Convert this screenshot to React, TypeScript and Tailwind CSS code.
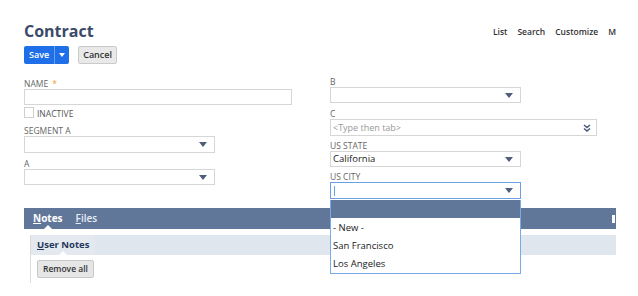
import React from "react";

const font = { fontFamily: '"Open Sans", "Liberation Sans", sans-serif' };

function Caret({ className = "" }: { className?: string }) {
  return (
    <svg width="8" height="5" viewBox="0 0 8 5" className={className}>
      <path d="M0 0 H8 L4 5 Z" fill="currentColor" />
    </svg>
  );
}

function Label({ text, required }: { text: string; required?: boolean }) {
  return (
    <div className="h-[11px] text-[8.5px] leading-[11px] uppercase text-[#666]">
      {text}
      {required && <span className="ml-[4px] text-[#e79b2b]">*</span>}
    </div>
  );
}

function Select({
  width,
  height = 16,
  value,
  focused,
}: {
  width: string;
  height?: number;
  value?: string;
  focused?: boolean;
}) {
  return (
    <div
      className={`flex items-center justify-between border px-[2px] pr-[7px] ${width} ${
        height === 17 ? "h-[17px]" : "h-[16px]"
      } ${focused ? "border-[#6a9fe6]" : "border-[#d6d6d6]"}`}
    >
      <span className="text-[9.5px] text-[#222]">
        {focused ? <span className="inline-block w-px h-[10px] bg-[#6a9fe6] align-middle ml-px" /> : value}
      </span>
      <Caret className="text-[#4d5f7c]" />
    </div>
  );
}

export default function App() {
  return (
    <div className="relative w-[638px] h-[296px] overflow-hidden bg-white" style={font}>
      <div className="w-[617px] h-full overflow-hidden">
        {/* Header */}
        <div className="flex items-start justify-between pl-[24px] pt-[21px]">
          <h1 className="text-[16px] leading-[20px] font-bold text-[#3b4a69]">Contract</h1>
          <nav className="flex gap-[10px] pt-[5px] pr-[1px] text-[8.5px] font-semibold text-[#333]">
            <span>List</span>
            <span>Search</span>
            <span>Customize</span>
            <span>M</span>
          </nav>
        </div>

        {/* Buttons */}
        <div className="flex gap-[9px] pl-[24px] mt-[5px]">
          <div className="flex h-[18px] rounded-[2px] bg-[#1f6fe8] text-white">
            <span className="px-[5px] text-[9px] font-semibold leading-[18px]">Save</span>
            <span className="w-px bg-[#6aa0f2]" />
            <span className="flex w-[14px] items-center justify-center">
              <svg width="6" height="4" viewBox="0 0 6 4">
                <path d="M0 0 H6 L3 4 Z" fill="white" />
              </svg>
            </span>
          </div>
          <div className="h-[18px] rounded-[2px] border border-[#cacaca] bg-[#e9e9e9] px-[4px] text-[9px] font-semibold leading-[16px] text-[#333]">
            Cancel
          </div>
        </div>

        {/* Form */}
        <div className="grid grid-cols-[306px_1fr] pl-[24px] mt-[12px]">
          <div className="flex flex-col pt-[2px]">
            <Label text="Name" required />
            <div className="h-[16px] w-[268px] border border-[#d6d6d6]" />
            <div className="mt-[2px] flex items-end gap-[3px] h-[11px]">
              <span className="h-[11px] w-[10px] border border-[#d0d0d0]" />
              <span className="text-[8.5px] leading-[9px] uppercase text-[#555]">Inactive</span>
            </div>
            <div className="mt-[7px]">
              <Label text="Segment A" />
            </div>
            <Select width="w-[191px]" height={17} />
            <div className="mt-[5px]">
              <Label text="A" />
            </div>
            <Select width="w-[191px]" />
          </div>

          <div className="relative flex flex-col">
            <Label text="B" />
            <Select width="w-[191px]" />
            <div className="mt-[5px]">
              <Label text="C" />
            </div>
            <div className="flex h-[17px] w-[267px] items-center justify-between border border-[#d6d6d6] px-[2px] pr-[5px]">
              <span className="text-[9px] text-[#999]">&lt;Type then tab&gt;</span>
              <svg width="8" height="8" viewBox="0 0 8 8">
                <path d="M1 1 L4 3.5 L7 1 M1 4.5 L4 7 L7 4.5" stroke="#4d5f7c" strokeWidth="1.6" fill="none" />
              </svg>
            </div>
            <div className="mt-[4px]">
              <Label text="US State" />
            </div>
            <Select width="w-[191px]" value="California" />
            <div className="mt-[4px]">
              <Label text="US City" />
            </div>
            <Select width="w-[191px]" height={17} focused />

            {/* Dropdown list */}
            <div className="absolute left-0 top-[124px] z-10 w-[191px] border border-t-0 border-[#7aaae8] bg-white text-[9.5px] text-[#222]">
              <div className="h-[18px] bg-[#607799]" />
              <div className="h-[18px] leading-[18px] pl-[2px] mt-[1px]">- New -</div>
              <div className="h-[18px] leading-[18px] pl-[2px]">San Francisco</div>
              <div className="h-[18px] leading-[18px] pl-[2px]">Los Angeles</div>
            </div>
          </div>
        </div>

        {/* Tabs */}
        <div className="ml-[24px] mt-[9px] flex h-[21px] w-[592px] items-center justify-between bg-[#607799] pl-[9px] pr-[1px] text-[10px] text-white">
          <div className="flex gap-[13px]">
            <span className="relative font-bold">
              <span className="underline">N</span>otes
              <span className="absolute left-1/2 -translate-x-1/2 top-[14px] h-0 w-0 border-x-[4px] border-b-[4px] border-x-transparent border-b-white" />
            </span>
            <span className="font-semibold text-[#e8edf5]">
              <span className="underline">F</span>iles
            </span>
          </div>
          <span className="h-[8px] w-[3px] bg-white" />
        </div>

        {/* Subtab panel */}
        <div className="ml-[30px] mt-[6px] w-[586px] border-l border-[#dcdcdc]">
          <div className="flex h-[20px] bg-[#dfe6ee]">
            <div className="relative bg-[#e4e9f0] px-[6px] text-[9.5px] font-bold leading-[20px] text-[#25375a]">
              <span className="underline">U</span>ser Notes
              <span className="absolute left-1/2 -translate-x-1/2 bottom-0 h-0 w-0 border-x-[4px] border-b-[4px] border-x-transparent border-b-white" />
            </div>
          </div>
          <div className="flex pl-[6px] pt-[5px] pb-[5px]">
            <div className="flex h-[18px] items-center rounded-[2px] border border-[#c8c8c8] bg-[#e6e6e6] px-[5px] text-[8.5px] font-semibold text-[#333]">
              Remove all
            </div>
          </div>
        </div>
      </div>
    </div>
  );
}
